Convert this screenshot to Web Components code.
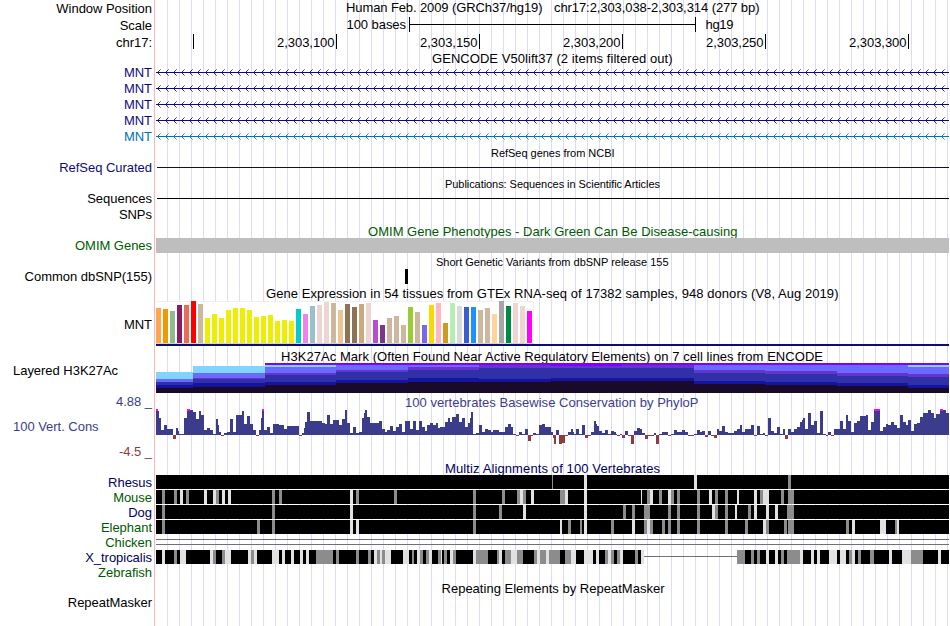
<!DOCTYPE html>
<html lang="en"><head><meta charset="utf-8"><title>Genome browser chr17</title>
<style>html,body{margin:0;background:#fff}body{width:950px;height:626px;overflow:hidden}</style></head>
<body>
<genome-view></genome-view>
<script>
const NAVY='#0c0c78', GREEN='#005a00', CONS='#3c3c8c';
const rect=(x,y,w,h,f)=>`<rect x="${x}" y="${y}" width="${w}" height="${h}" fill="${f}"/>`;

/* One horizontal band: a label at the left and a plot at the right. */
class TrackRow extends HTMLElement{
  connectedCallback(){
    const a=(n,d)=>this.getAttribute(n)??d;
    this.attachShadow({mode:'open'}).innerHTML=`<style>
      :host{display:grid;grid-template-columns:154px 795px;height:${a('h',16)}px;font:13px/15px "Liberation Sans",Arial,sans-serif}
      .label{box-sizing:border-box;height:0;padding:${a('base',13)-12}px 2px 0 13px;text-align:${a('align','right')};color:${a('color','#000')};white-space:pre;letter-spacing:-.03px}
      .plot{grid-column:2;display:block;height:0}
      </style><div class="label">${a('label','')}</div><div class="plot"><slot></slot></div>`;
  }
}
customElements.define('track-row',TrackRow);

/* Base for drawings; the coordinate origin is the left edge of the page, at the row's top. */
class PlotBase extends HTMLElement{
  connectedCallback(){
    this.attachShadow({mode:'open'}).innerHTML=`<style>:host{display:block;height:0}
      svg{display:block;overflow:visible}rect,path{shape-rendering:crispEdges}
      text{font-family:"Liberation Sans",Arial,sans-serif;white-space:pre}</style>
      <svg width="795" height="1" viewBox="154 0 795 1">${this.draw()}</svg>`;
  }
  text(x0,x1,y,s,size=13,color='#000'){
    return `<text x="${x0+.5}" y="${y}" font-size="${size}" fill="${color}" textLength="${x1-x0-.5}" lengthAdjust="spacing">${s}</text>`;
  }
}
customElements.define('track-title',class extends PlotBase{
  draw(){const g=n=>this.getAttribute(n);return this.text(+g('from'),+g('to'),+g('y'),g('text'),+(g('size')||13),g('color')||'#000')}
});
customElements.define('scale-bar',class extends PlotBase{
  draw(){return this.text(346,406,12,'100 bases')+rect(409,7,287,1,'#000')+rect(409,0,1,15,'#000')+rect(695,0,1,15,'#000')+this.text(705,733.5,12,'hg19')}
});
customElements.define('base-ruler',class extends PlotBase{
  draw(){return [193,336,479,622,765,908].map((x,i)=>rect(x,0,1,15,'#000')+(i?this.text(x-59.5,x-1.5,13,'2,303,'+(50+50*i)):'')).join('')}
});
customElements.define('gene-line',class extends PlotBase{
  draw(){
    const c=this.getAttribute('color')||NAVY;let near='',far='';
    for(let x=157;x<946;x+=8){
      near+=`M${x+1} 7h1v1h-1zM${x+1} 9h1v1h-1zM${x+2} 6h1v1h-1zM${x+2} 10h1v1h-1z`;
      far+=`M${x+3} 5h1v1h-1zM${x+3} 11h1v1h-1z`;
    }
    return rect(156,8,793,1,c)+`<path d="${near}" fill="${c}" opacity=".85"/><path d="${far}" fill="${c}" opacity=".5"/>`;
  }
});
customElements.define('flat-bar',class extends PlotBase{
  draw(){const [x,y,w,h]=this.getAttribute('box').split(' ');return rect(x,y,w,h,this.getAttribute('color'))}
});

const TISSUES=`69 ffa54f,72 ee9a00,78 8fbc8f,60 8b1c62,60 ee6a50,48 ff0000,57 cdb79e,99 eeee00,87 eeee00,99 eeee00,75 eeee00,69 eeee00,69 eeee00,75 eeee00,96 eeee00,93 eeee00,90 eeee00,108 eeee00,105 eeee00,108 eeee00,72 00cdcd,87 ee82ee,63 9ac0cd,60 eed5d2,51 eed5d2,54 cdb79e,75 eec591,57 8b7355,66 8b7355,57 cdaa7d,54 eed5d2,105 b452cd,120 7a378b,99 cdb79e,93 cdb79e,120 cdb79e,66 9acd32,81 cdb79e,120 7a67ee,60 ffd700,54 ffb6c1,114 cd9b1d,54 b4eeb4,63 d9d9d9,66 3a5fcd,66 1e90ff,75 cdb79e,69 cdb79e,87 ffd39b,48 a6a6a6,63 008b45,54 eed5d2,63 eed5d2,78 ff00ff`.split(',');
customElements.define('expression-bars',class extends PlotBase{
  draw(){return rect(156,2,378,43,'#f0f0f0')+rect(156,3,377,41,'#fff')+rect(156,44,378,1,'#d3d3d3')+
    TISSUES.map((t,i)=>{const [v,c]=t.split(' '),h=(174-v)/3;return rect(156+7*i,44-h,5,h,'#'+c)}).join('')+rect(156,45,793,2,NAVY)}
});

/* Each step: left edge, then the top of every layer (0 = absent). */
const LAYERS=['#7f00ff','#80d4ff','#6a6aff','#6633cc','#3030a8','#1414a0','#180a28'];
const STEPS=[[156,0,372,379,0,382,385,388],[193,0,366,373,378,379,383,387],[265,363,365,367,373,375,382,385],[336,363,0,365,370,372,380,383],[408,363,0,365,367,370,378,382],[479,363,0,0,365,368,379,382],[551,363,0,0,366,368,378,381],[622,363,0,0,365,368,378,381],[694,363,0,365,370,373,381,384],[765,363,0,365,371,374,382,385],[837,363,0,365,373,376,383,386],[908,363,365,367,374,377,385,388]];
customElements.define('mark-layers',class extends PlotBase{
  draw(){return STEPS.map(([x,...t],i)=>{const w=(STEPS[i+1]?.[0]??949)-x;
    return t.map((y,k)=>y?rect(x,y-363,w,393-y,LAYERS[k]):'').join('')}).join('')}
});

/* Conservation profile: per panel, "right-edge level" in thirds of a pixel, zero level 120. */
const PROFILE=[[156,150,18,'24 42,27 48,33 69,42 105,51 90,69 102,78 132,84 99,87 108,102 117,111 69,120 42,129 45,138 51,147 72,153 48,162 60,171 105,180 99,189 105,198 117,204 72,207 90,213 111,222 123,231 114,240 111,249 72,258 111,276 60,282 48,291 87,300 63,309 87,318 105,327 123,333 105,336 69,342 42,351 105,360 96,369 114,387 87,402 90,411 102,447 93,456 123,462 114,465 99,471 81,480 51,489 78,516 78,525 84,531 87,540 60,549 87,567 75,576 90,585 72,591 45,600 84,609 114,618 96,627 114,636 111,642 69,645 54,651 45,660 66,687 84,696 78,705 102,711 111,720 105,729 93,738 108,747 96,756 87,765 111,780 78,789 102,798 78,807 105,810 78'],
[0,420,0,'6 78,15 96,21 108,30 90,39 84,48 90,54 84,60 99,75 96,84 81,90 69,96 81,108 66,117 57,126 81,135 69,144 96,150 84,153 69,159 51,168 117,177 114,186 90,195 111,204 102,213 105,219 111,237 105,255 111,264 96,273 87,279 96,288 117,297 123,306 111,315 117,324 102,333 138,339 123,348 114,357 117,366 90,375 87,393 96,399 111,402 129,408 147,417 105,426 147,435 144,444 123,453 111,459 102,462 111,468 117,477 102,486 117,495 90,504 129,513 123,522 111,528 78,531 87,537 93,546 108,555 114,564 105,573 117,582 108,588 111,591 117,600 123,606 117,615 129,624 108,633 123,642 147,651 108,660 99,666 102,675 114,684 132,702 123,708 114,717 147,726 117,744 111,753 123,762 117,771 105,780 111'],
[0,680,0,'6 111,15 105,24 111,42 123,51 117,60 105,66 111,75 108,84 126,93 108,102 123,111 129,117 102,126 108,135 93,144 111,162 114,171 108,180 102,186 90,195 111,213 102,222 90,231 123,240 93,249 117,255 114,264 123,273 69,282 108,291 114,300 96,309 117,315 102,324 132,333 102,342 111,351 102,360 96,366 81,369 75,375 69,384 102,393 54,402 90,411 78,420 114,429 48,438 117,444 123,453 111,462 123,480 102,489 78,498 102,504 60,513 78,522 111,531 84,540 78,558 63,564 60,573 105,582 81,600 42,609 108,618 96,624 87,633 90,642 81,651 90,660 99,669 60,678 81,684 90,693 75,702 108,711 87,720 84,729 66,744 54,753 45,762 54,768 69,780 57,789 42,798 45,807 54']];
customElements.define('conservation-plot',class extends PlotBase{
  draw(){let s='';for(const [,o,start,d] of PROFILE){let p=start;for(const e of d.split(',')){
    const [r,v]=e.split(' ').map(Number),x=o+p/3,w=(r-p)/3;
    s+=v<120?rect(x,26-(120-v)/3,w,(120-v)/3,CONS):rect(x,26,w,(v-120)/3,'#8c3c3c');
    if(v===42)s+=rect(x,0,w,2,'#f0f');p=r}}return s}
});

/* Alignment stripes: "start end tone" in thirds of a pixel from each panel's origin. */
const STRIPES={
rhesus:{420:'396 399 g,492 501 w',680:'42 51 w,324 333 g'},
mouse:{150:'36 45 g,72 81 g,90 99 w,108 117 g,162 171 w,189 198 w,198 207 g,216 225 w,234 243 w,366 375 g,387 396 g,600 609 w,618 627 g,732 741 g',420:'159 168 g,246 255 g,291 300 g,300 309 w,309 318 g,333 342 w,420 435 g,435 444 w,492 501 w,663 666 w,681 690 g,690 699 w,717 726 g,744 753 w,753 762 g,771 780 g',680:'51 60 g,87 96 w,105 114 g,135 144 g,171 177 w,222 231 w,240 249 g,249 267 w,303 312 g,324 342 g'},
dog:{150:'36 45 g,366 375 g,600 609 w',420:'159 168 g,237 246 g,309 318 w,492 501 w,609 618 g,636 645 g,672 690 g,744 753 g,771 780 g',680:'51 60 g,96 105 w,105 114 g,135 144 g,165 171 w,204 213 g,222 231 w,258 267 w,285 294 w,321 342 g'},
elephant:{150:'36 45 g,321 330 g,366 375 g,600 609 w,618 627 w',420:'159 168 g,420 426 w,444 453 g,480 486 g,492 501 w,573 582 g,636 645 w,672 681 g,681 690 w,690 699 g,726 735 g,744 753 g,771 780 g',680:'51 60 g,135 144 g,195 204 g,249 258 w,258 267 g,312 321 g,324 342 g,498 507 g,516 525 w,600 618 w,645 651 g,651 657 w'},
frog:{150:'36 45 w,72 81 g,90 108 w,180 189 w,189 198 g,216 225 g,225 243 w,294 303 w,303 312 g,312 321 w,366 387 w,396 405 w,423 432 w,450 459 w,468 477 w,498 549 g,558 567 g,618 627 g,654 663 g,672 681 w,681 690 g,690 696 w,696 705 g,705 723 w,759 777 w,786 792 g,801 810 w',420:'0 9 g,18 27 g,27 36 w,54 63 g,63 66 w,72 81 g,90 99 w,99 108 g,159 168 w,168 204 g,231 237 g,237 246 w,255 273 g,273 291 w,291 309 g,342 351 g,351 360 w,360 378 g,378 387 w,387 420 g,435 453 g,453 468 w,492 519 w,528 537 w,555 564 g,564 573 w,573 582 g,591 600 g,600 609 w,645 654 g,663 672 w',680:'171 195 g,213 222 g,231 240 g,258 267 w,285 294 w,303 312 g,321 360 g,360 369 w,393 402 w,411 420 w,447 471 w,480 498 w,507 516 g,516 525 w,534 543 g,570 582 g,627 636 w,666 693 w,693 729 g,774 783 w'}};
customElements.define('alignment-strip',class extends PlotBase{
  draw(){const k=this.getAttribute('species');
    if(k==='chicken')return rect(156,4,793,1,'#707070')+rect(156,9,793,1,'#707070');
    let s=k==='frog'?rect(156,0,488,14,'#000')+rect(644,6,93,1,'#707070')+rect(737,0,212,14,'#000'):rect(156,0,793,14,'#000');
    for(const [o,d] of Object.entries(STRIPES[k]))for(const e of d.split(',')){const [a,b,t]=e.split(' ');s+=rect(+o+a/3,0,(b-a)/3,14,t==='g'?'#8c8c8c':'#e1e1e1')}
    return s}
});

const title=(h,from,to,y,text,color='#000',size=13)=>`<track-row h="${h}"><track-title from="${from}" to="${to}" y="${y}" text="${text}" color="${color}" size="${size}"></track-title></track-row>`;
const row=(label,color,h,base,body='',align='right')=>`<track-row label="${label}" color="${color}" h="${h}" base="${base}" align="${align}">${body}</track-row>`;
const strip=k=>`<alignment-strip species="${k}"></alignment-strip>`;
customElements.define('genome-view',class extends HTMLElement{
  connectedCallback(){
    this.attachShadow({mode:'open'}).innerHTML=`<style>
    :host{display:flex;flex-direction:column;width:949px;height:626px;
      background:linear-gradient(#ffb4b4,#ffb4b4) 154px 0/1px 100% no-repeat,repeating-linear-gradient(90deg,transparent 0 11px,#dcdcf8 11px 12px) 156px 0/793px 100% no-repeat}
    track-row{flex:none}</style>`+
    row('Window Position','#000',17,13,`<track-title from="345.5" to="542.5" y="12" text="Human Feb. 2009 (GRCh37/hg19)"></track-title><track-title from="553.5" to="759.5" y="12" text="chr17:2,303,038-2,303,314 (277 bp)"></track-title>`)+
    row('Scale','#000',17,13,'<scale-bar></scale-bar>')+
    row('chr17:','#000',16,13,'<base-ruler></base-ruler>')+
    title(14,431.5,672.5,13,'GENCODE V50lift37 (2 items filtered out)')+
    row('MNT',NAVY,16,13,'<gene-line></gene-line>').repeat(4)+
    row('MNT','#0072b2',16,13,'<gene-line color="#0072b2"></gene-line>')+
    title(15,490.5,614.5,13,'RefSeq genes from NCBI','#000',11)+
    row('RefSeq Curated',NAVY,16,13,'<flat-bar box="157 8 792 1" color="#0c0c50"></flat-bar>')+
    title(15,444.5,660,13,'Publications: Sequences in Scientific Articles','#000',11)+
    row('Sequences','#000',16,13,'<flat-bar box="157 8 792 1" color="#000"></flat-bar>')+
    row('SNPs','#000',16,13)+
    title(15,367.5,737.5,14,'OMIM Gene Phenotypes - Dark Green Can Be Disease-causing',GREEN)+
    row('OMIM Genes',GREEN,16,13,'<flat-bar box="156 1 793 15" color="#bebebe"></flat-bar>')+
    title(15,435.5,668.5,13,'Short Genetic Variants from dbSNP release 155','#000',11)+
    row('Common dbSNP(155)','#000',16,13,'<flat-bar box="405 1 3 15" color="#000"></flat-bar>')+
    title(15,265.5,838.5,14,'Gene Expression in 54 tissues from GTEx RNA-seq of 17382 samples, 948 donors (V8, Aug 2019)')+
    row('MNT','#000',47,30,'<expression-bars></expression-bars>')+
    title(17,280.5,823,15,'H3K27Ac Mark (Often Found Near Active Regulatory Elements) on 7 cell lines from ENCODE')+
    row('Layered H3K27Ac','#000',30,12,'<mark-layers></mark-layers>','left')+
    row('4.88 _',CONS,16,13,`<track-title from="404.5" to="698.5" y="14" text="100 vertebrates Basewise Conservation by PhyloP" color="${CONS}"></track-title>`)+
    row('100 Vert. Cons',CONS,32,22,'<conservation-plot></conservation-plot>','left')+
    row('-4.5 _','#8c3c3c',18,15)+
    title(16,444.5,660,14,'Multiz Alignments of 100 Vertebrates','#000060')+
    row('Rhesus','#000060',15,12,strip('rhesus'))+
    row('Mouse',GREEN,15,12,strip('mouse'))+
    row('Dog','#000060',15,12,strip('dog'))+
    row('Elephant',GREEN,15,12,strip('elephant'))+
    row('Chicken',GREEN,15,12,strip('chicken'))+
    row('X_tropicalis','#000060',15,12,strip('frog'))+
    row('Zebrafish',GREEN,15,12)+
    title(15,441,664.5,13,'Repeating Elements by RepeatMasker')+
    row('RepeatMasker','#000',31,12);
  }
});
</script>
</body></html>
